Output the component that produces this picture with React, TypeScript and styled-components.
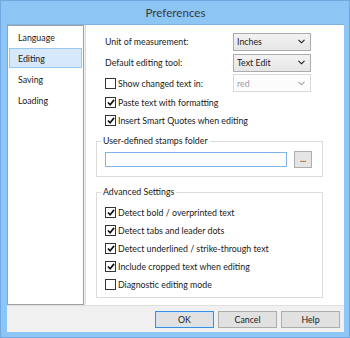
import React from "react";
import styled, { createGlobalStyle } from "styled-components";

const Global = createGlobalStyle`
  html, body {
    margin: 0;
    padding: 0;
    background: #8dc5f5;
  }
  * {
    box-sizing: border-box;
  }
`;

const Frame = styled.div`
  width: 350px;
  height: 338px;
  background: #8dc5f5;
  border: 1px solid #6fa9e0;
  padding: 0 5px 5px 6px;
  display: flex;
  flex-direction: column;
  font-family: Lato, "Noto Sans", sans-serif;
  font-size: 8.8px;
  color: #1a1a1a;
`;

const TitleBar = styled.div`
  height: 23px;
  display: flex;
  align-items: center;
  justify-content: center;
  font-size: 11.6px;
  color: #3a3a3a;
  padding-bottom: 1px;
`;

const Client = styled.div`
  flex: 1;
  display: flex;
  flex-direction: column;
  background: #f0f0f0;
  border-top: 1px solid #7fb3e3;
`;

const Body = styled.div`
  height: 280px;
  display: flex;
  gap: 1px;
`;

const Sidebar = styled.ul`
  width: 77px;
  margin: 0;
  padding: 1px 1px 0 1px;
  list-style: none;
  background: #fff;
  border: 1px solid #a0a0a0;
  display: flex;
  flex-direction: column;
  gap: 1px;
`;

const NavItem = styled.li<{ $active?: boolean }>`
  height: 20px;
  display: flex;
  align-items: center;
  padding-left: 8px;
  border: 1px solid ${(p) => (p.$active ? "#99c9f2" : "transparent")};
  background: ${(p) => (p.$active ? "#d5e9fb" : "transparent")};
`;

const Panel = styled.div`
  flex: 1;
  background: #fff;
  border-left: 1px solid #dcdcdc;
  padding: 6px 21px 0 10px;
  display: flex;
  flex-direction: column;
`;

const FieldRow = styled.div<{ $h?: number }>`
  height: ${(p) => p.$h ?? 21}px;
  display: flex;
  align-items: center;
  padding-left: 9px;
`;

const FieldLabel = styled.span`
  width: 128px;
`;

const CheckLabel = styled.label`
  width: 128px;
  display: flex;
  align-items: center;
  gap: 2px;
`;

const Select = styled.div<{ $disabled?: boolean }>`
  width: 78px;
  height: 18px;
  display: flex;
  align-items: center;
  justify-content: space-between;
  padding: 0 5px 0 3px;
  border: 1px solid ${(p) => (p.$disabled ? "#d9d9d9" : "#acacac")};
  background: ${(p) =>
    p.$disabled ? "#fcfcfc" : "linear-gradient(#f2f2f2, #e6e6e6)"};
  color: ${(p) => (p.$disabled ? "#a0a0a0" : "#1a1a1a")};
`;

const CheckRow = styled.div<{ $inset: number }>`
  height: 18px;
  display: flex;
  align-items: center;
  gap: 2px;
  padding-left: ${(p) => p.$inset}px;
`;

const Box = styled.span`
  width: 11px;
  height: 11px;
  flex: none;
  border: 1px solid #333;
  background: #fff;
  display: flex;
  align-items: center;
  justify-content: center;
`;

const Group = styled.fieldset<{ $h: number; $top: number }>`
  margin: ${(p) => p.$top}px 0 0 0;
  height: ${(p) => p.$h}px;
  border: 1px solid #dcdcdc;
  padding: 0;
  display: flex;
  flex-direction: column;
`;

const Legend = styled.legend`
  margin-left: 4px;
  padding: 0 2px;
  line-height: 10px;
`;

const FolderRow = styled.div`
  display: flex;
  align-items: center;
  gap: 7px;
  padding: 5px 0 0 8px;
`;

const TextInput = styled.div`
  width: 182px;
  height: 15px;
  border: 1px solid #7eb4ea;
  background: #fff;
`;

const SmallButton = styled.div`
  width: 18px;
  height: 17px;
  border: 1px solid #adadad;
  background: #e5e5e5;
  display: flex;
  align-items: center;
  justify-content: center;
  line-height: 1;
`;

const GroupList = styled.div`
  display: flex;
  flex-direction: column;
  padding-top: 6px;
`;

const Footer = styled.div`
  flex: 1;
  display: flex;
  justify-content: flex-end;
  align-items: flex-start;
  gap: 4px;
  padding: 5px 4px 0 0;
  border-top: 1px solid #dfdfdf;
`;

const Button = styled.div<{ $default?: boolean }>`
  width: 59px;
  height: 17px;
  display: flex;
  align-items: center;
  justify-content: center;
  border: 1px solid ${(p) => (p.$default ? "#3c8fe0" : "#adadad")};
  background: #e1e1e1;
  box-shadow: ${(p) => (p.$default ? "inset 0 0 0 1px #cfe4f8" : "none")};
`;

const Chevron = () => (
  <svg width="7" height="5" viewBox="0 0 7 5">
    <path d="M0.5 0.8 L3.5 3.8 L6.5 0.8" fill="none" stroke="currentColor" strokeWidth="1.1" />
  </svg>
);

const Tick = () => (
  <svg width="8" height="7" viewBox="0 0 9 8">
    <path d="M1 4 L3.5 6.5 L8 1" fill="none" stroke="#111" strokeWidth="1.9" />
  </svg>
);

const Check: React.FC<{ on?: boolean; label: string; inset?: number }> = ({
  on,
  label,
  inset = 9,
}) => (
  <CheckRow $inset={inset}>
    <Box>{on && <Tick />}</Box>
    <span>{label}</span>
  </CheckRow>
);

const advanced = [
  { label: "Detect bold / overprinted text", on: true },
  { label: "Detect tabs and leader dots", on: true },
  { label: "Detect underlined / strike-through text", on: true },
  { label: "Include cropped text when editing", on: true },
  { label: "Diagnostic editing mode", on: false },
];

const App: React.FC = () => (
  <>
    <Global />
    <Frame>
      <TitleBar>Preferences</TitleBar>
      <Client>
        <Body>
          <Sidebar>
            <NavItem>Language</NavItem>
            <NavItem $active>Editing</NavItem>
            <NavItem>Saving</NavItem>
            <NavItem>Loading</NavItem>
          </Sidebar>
          <Panel>
            <FieldRow>
              <FieldLabel>Unit of measurement:</FieldLabel>
              <Select>
                Inches
                <Chevron />
              </Select>
            </FieldRow>
            <FieldRow>
              <FieldLabel>Default editing tool:</FieldLabel>
              <Select>
                Text Edit
                <Chevron />
              </Select>
            </FieldRow>
            <FieldRow $h={20}>
              <CheckLabel>
                <Box />
                Show changed text in:
              </CheckLabel>
              <Select $disabled>
                red
                <Chevron />
              </Select>
            </FieldRow>
            <Check on label="Paste text with formatting" />
            <Check on label="Insert Smart Quotes when editing" />
            <Group $top={7} $h={41}>
              <Legend>User-defined stamps folder</Legend>
              <FolderRow>
                <TextInput />
                <SmallButton>...</SmallButton>
              </FolderRow>
            </Group>
            <Group $top={10} $h={111}>
              <Legend>Advanced Settings</Legend>
              <GroupList>
                {advanced.map((a) => (
                  <Check key={a.label} on={a.on} label={a.label} inset={8} />
                ))}
              </GroupList>
            </Group>
          </Panel>
        </Body>
        <Footer>
          <Button $default>OK</Button>
          <Button>Cancel</Button>
          <Button>Help</Button>
        </Footer>
      </Client>
    </Frame>
  </>
);

export default App;
